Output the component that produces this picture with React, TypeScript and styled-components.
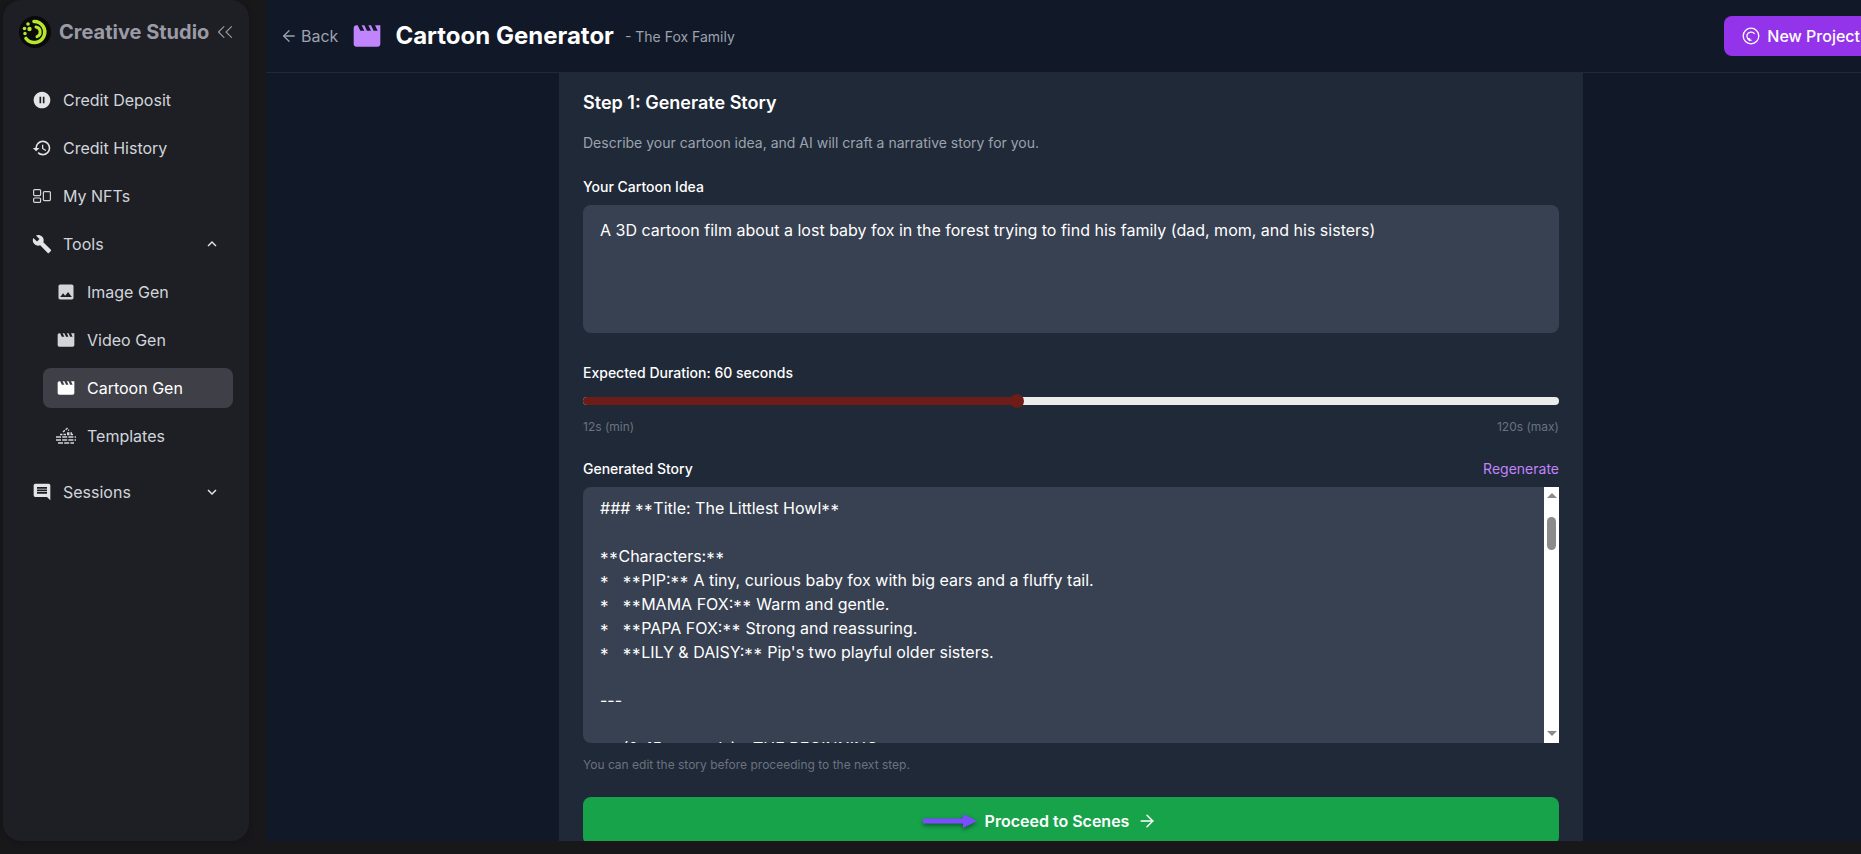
import React from "react";
import styled, { createGlobalStyle } from "styled-components";
import { ArrowLeft, ArrowRight, ChevronsLeft } from "lucide-react";
import {
  MdBuild,
  MdComment,
  MdExpandLess,
  MdExpandMore,
  MdHistory,
  MdImage,
  MdMovie,
  MdPauseCircleFilled,
} from "react-icons/md";

const GlobalStyle = createGlobalStyle`
  html, body {
    margin: 0;
    height: 100%;
    overflow: hidden;
    background: #18181b;
    font-family: Inter, "Liberation Sans", sans-serif;
  }
  * { box-sizing: border-box; }
`;

const Shell = styled.div`
  display: flex;
  width: 1861px;
  height: 854px;
  padding: 0 0 13px 3px;
  overflow: hidden;
`;

const Sidebar = styled.aside`
  flex: 0 0 246px;
  margin-right: 17px;
  background: #1e1f24;
  border-radius: 18px;
  box-shadow: 0 0 6px rgba(0, 0, 0, 0.25);
`;

const Brand = styled.div`
  display: flex;
  align-items: center;
  height: 64px;
  padding-left: 16px;
`;

const BrandName = styled.span`
  margin-left: 8px;
  font-size: 20px;
  font-weight: 700;
  color: #9b9ba6;
  white-space: nowrap;
`;

const Collapse = styled.span`
  display: flex;
  margin-left: 3px;
  color: #9b9ba6;
`;

const Nav = styled.nav`
  display: flex;
  flex-direction: column;
  gap: 8px;
  margin-top: 16px;
  padding: 0 16px;
`;

const NavItem = styled.div<{ $active?: boolean }>`
  display: flex;
  align-items: center;
  height: 40px;
  padding: 0 13px;
  border-radius: 8px;
  font-size: 16px;
  font-weight: 400;
  color: ${(p) => (p.$active ? "#ffffff" : "#d1d5db")};
  background: ${(p) => (p.$active ? "#3f4047" : "transparent")};
`;

const NavIcon = styled.span`
  display: flex;
  justify-content: center;
  flex: 0 0 20px;
  min-width: 0;
  margin-right: 11px;

  svg {
    flex-shrink: 0;
  }
`;

const Caret = styled.span`
  display: flex;
  margin-left: auto;
  margin-right: -1px;
`;

const ChildList = styled.div`
  display: flex;
  flex-direction: column;
  gap: 8px;
  margin-left: 24px;
  margin-bottom: 8px;
`;

const Main = styled.main`
  flex: 0 0 1610px;
  display: flex;
  flex-direction: column;
  background: #111827;
  overflow: hidden;
`;

const TopBar = styled.header`
  flex: 0 0 73px;
  display: flex;
  align-items: center;
  padding-left: 14px;
  border-bottom: 1px solid #1f2937;
`;

const BackLink = styled.span`
  display: flex;
  align-items: center;
  gap: 3px;
  font-size: 16px;
  color: #9ca3af;
`;

const TitleIcon = styled.span`
  display: flex;
  margin-left: 13px;
  color: #c084fc;
`;

const Title = styled.h1`
  margin: 0 0 0 12px;
  font-size: 24px;
  line-height: 32px;
  font-weight: 700;
  color: #ffffff;
`;

const Subtitle = styled.span`
  margin-left: 11px;
  font-size: 14px;
  color: #9ca3af;
`;

const NewProject = styled.button`
  display: flex;
  align-items: center;
  flex-shrink: 0;
  gap: 7px;
  margin-left: auto;
  margin-right: -4px;
  height: 40px;
  padding: 0 20px 0 18px;
  border: 0;
  border-radius: 8px;
  background: #9333ea;
  color: #ffffff;
  font-family: inherit;
  font-size: 16px;
  font-weight: 500;
`;

const Card = styled.section`
  flex: 1;
  width: 1024px;
  margin: 0 auto;
  padding: 16px 24px 0;
  background: #1f2937;
`;

const Heading = styled.h2`
  margin: 0;
  font-size: 18px;
  line-height: 28px;
  font-weight: 600;
  color: #ffffff;
`;

const Description = styled.p`
  margin: 16px 0 0;
  font-size: 14px;
  line-height: 20px;
  color: #9ca3af;
`;

const Label = styled.label`
  display: block;
  font-size: 14px;
  line-height: 20px;
  font-weight: 500;
  color: #ffffff;
`;

const IdeaField = styled.div`
  margin-top: 24px;
`;

const IdeaText = styled.div`
  height: 128px;
  margin-top: 8px;
  padding: 13px 17px;
  border-radius: 8px;
  background: #374151;
  font-size: 16px;
  line-height: 24px;
  color: #ffffff;
`;

const DurationField = styled.div`
  margin-top: 30px;
`;

const Track = styled.div`
  display: flex;
  align-items: center;
  height: 8px;
  margin-top: 14px;
  border-radius: 4px;
  background: #ececec;
`;

const TrackFill = styled.div`
  display: flex;
  align-items: center;
  justify-content: flex-end;
  height: 8px;
  border-radius: 4px 0 0 4px;
  background: #6e1c18;
`;

const Thumb = styled.div`
  flex: 0 0 14px;
  height: 14px;
  margin-right: -7px;
  border-radius: 50%;
  background: #6e1c18;
`;

const RangeEnds = styled.div`
  display: flex;
  justify-content: space-between;
  margin-top: 14px;
  font-size: 12px;
  line-height: 16px;
  color: #6b7280;
`;

const StoryHead = styled.div`
  display: flex;
  justify-content: space-between;
  margin-top: 24px;
`;

const Regenerate = styled.span`
  font-size: 14px;
  line-height: 20px;
  color: #c084fc;
`;

const StoryBox = styled.div`
  display: flex;
  height: 256px;
  margin-top: 8px;
  border-radius: 8px 0 0 8px;
  background: #374151;
  overflow: hidden;
`;

const StoryText = styled.div`
  flex: 1;
  padding: 9px 17px 0;
  font-size: 16px;
  line-height: 24px;
  color: #ffffff;
  white-space: pre-wrap;
`;

const Stars = styled.span`
  font-size: 17px;
  line-height: 0;
  letter-spacing: 0.7px;
  vertical-align: -3px;
`;

const ScrollTrack = styled.div`
  flex: 0 0 15px;
  display: flex;
  flex-direction: column;
  align-items: center;
  padding: 6px 0 7px;
  background: #ffffff;
`;

const ScrollArrow = styled.span<{ $down?: boolean }>`
  width: 0;
  height: 0;
  border-left: 5px solid transparent;
  border-right: 5px solid transparent;
  ${(p) => (p.$down ? "border-top" : "border-bottom")}: 5px solid #8a8a8a;
  ${(p) => (p.$down ? "margin-top: auto;" : "")}
`;

const ScrollThumb = styled.span`
  width: 9px;
  height: 33px;
  margin-top: 19px;
  border-radius: 5px;
  background: #8b8b8b;
`;

const Hint = styled.p`
  margin: 14px 0 0;
  font-size: 12px;
  line-height: 16px;
  color: #6b7280;
`;

const ProceedButton = styled.button`
  position: relative;
  display: flex;
  align-items: center;
  justify-content: center;
  gap: 8px;
  width: 100%;
  height: 48px;
  margin-top: 24px;
  border: 0;
  border-radius: 8px;
  background: #16a34a;
  color: #ffffff;
  font-family: inherit;
  font-size: 16px;
  font-weight: 600;
`;

const Annotation = styled.svg`
  position: absolute;
  left: 339px;
  top: 15px;
  filter: drop-shadow(0 2px 2px rgba(0, 0, 0, 0.45));
`;

const Logo = () => (
  <svg width="32" height="32" viewBox="0 0 32 32">
    <circle cx="16" cy="16" r="16" fill="#0a0a0a" />
    <path
      d="M15 5.5a10.5 10.5 0 1 1-8 17"
      fill="none"
      stroke="#b8e62e"
      strokeWidth="3.6"
      strokeLinecap="round"
    />
    <path
      d="M17 11a5 5 0 0 1 1 9.6"
      fill="none"
      stroke="#b8e62e"
      strokeWidth="3"
      strokeLinecap="round"
    />
    <circle cx="9" cy="8" r="1.8" fill="#b8e62e" />
    <circle cx="5.5" cy="12.5" r="1.8" fill="#b8e62e" />
    <circle cx="10.5" cy="13" r="2.2" fill="#b8e62e" />
    <circle cx="6" cy="17.5" r="1.7" fill="#b8e62e" />
  </svg>
);

const NftIcon = () => (
  <svg width="18" height="14" viewBox="0 0 18 14" fill="none" stroke="#d4d4d8" strokeWidth="1.2">
    <rect x="0.6" y="0.6" width="7" height="6" rx="1" />
    <rect x="0.6" y="9" width="7" height="4.4" rx="1" />
    <rect x="10.4" y="2.6" width="7" height="9" rx="1" />
  </svg>
);

const TemplatesIcon = () => (
  <svg width="22" height="18" viewBox="0 0 22 18" fill="none" stroke="#d4d4d8" strokeWidth="1.4">
    <path d="M8 5l4-3.5 2 2M12 6h5M5 7.5h13" strokeDasharray="2.5 1" />
    <path d="M1 10h20M1 13h20M3 16h16" strokeDasharray="5 1.2" />
  </svg>
);

const NewProjectIcon = () => (
  <svg width="18" height="18" viewBox="0 0 18 18" fill="none" stroke="#ffffff" strokeWidth="1.3">
    <circle cx="9" cy="9" r="7.8" />
    <path d="M12.6 6.8A4.4 4.4 0 0 0 5 8a4.4 4.4 0 0 0 4.6 5.3" />
    <path d="M5.4 11.6l2.2.4-.4 2.2" />
  </svg>
);

// "**" has wider and lower asterisks in the reference font
const Starred = ({ text }: { text: string }) => (
  <>
    {text.split(/(\*+)/).map((part, i) =>
      part.startsWith("*") ? <Stars key={i}>{part}</Stars> : part
    )}
  </>
);

const story = `### **Title: The Littlest Howl**

**Characters:**
*   **PIP:** A tiny, curious baby fox with big ears and a fluffy tail.
*   **MAMA FOX:** Warm and gentle.
*   **PAPA FOX:** Strong and reassuring.
*   **LILY & DAISY:** Pip's two playful older sisters.

---

\u00a0\u00a0\u00a0\u00a0\u00a0(0-15 seconds) - THE BEGINNING`;

export default function App() {
  return (
    <>
      <GlobalStyle />
      <Shell>
        <Sidebar>
          <Brand>
            <Logo />
            <BrandName>Creative Studio</BrandName>
            <Collapse>
              <ChevronsLeft size={26} strokeWidth={1} />
            </Collapse>
          </Brand>
          <Nav>
            <NavItem>
              <NavIcon>
                <MdPauseCircleFilled size={20} color="#e4e4e7" />
              </NavIcon>
              Credit Deposit
            </NavItem>
            <NavItem>
              <NavIcon>
                <MdHistory size={20} color="#e4e4e7" />
              </NavIcon>
              Credit History
            </NavItem>
            <NavItem>
              <NavIcon>
                <NftIcon />
              </NavIcon>
              My NFTs
            </NavItem>
            <NavItem>
              <NavIcon>
                <MdBuild size={20} color="#e4e4e7" />
              </NavIcon>
              Tools
              <Caret>
                <MdExpandLess size={18} color="#e4e4e7" />
              </Caret>
            </NavItem>
            <ChildList>
              <NavItem>
                <NavIcon>
                  <MdImage size={20} color="#d4d4d8" />
                </NavIcon>
                Image Gen
              </NavItem>
              <NavItem>
                <NavIcon>
                  <MdMovie size={20} color="#d4d4d8" />
                </NavIcon>
                Video Gen
              </NavItem>
              <NavItem $active>
                <NavIcon>
                  <MdMovie size={20} color="#ffffff" />
                </NavIcon>
                Cartoon Gen
              </NavItem>
              <NavItem>
                <NavIcon>
                  <TemplatesIcon />
                </NavIcon>
                Templates
              </NavItem>
            </ChildList>
            <NavItem>
              <NavIcon>
                <MdComment size={20} color="#e4e4e7" />
              </NavIcon>
              Sessions
              <Caret>
                <MdExpandMore size={18} color="#e4e4e7" />
              </Caret>
            </NavItem>
          </Nav>
        </Sidebar>
        <Main>
          <TopBar>
            <BackLink>
              <ArrowLeft size={18} strokeWidth={1.75} />
              Back
            </BackLink>
            <TitleIcon>
              <MdMovie size={32} />
            </TitleIcon>
            <Title>Cartoon Generator</Title>
            <Subtitle>- The Fox Family</Subtitle>
            <NewProject>
              <NewProjectIcon />
              New Project
            </NewProject>
          </TopBar>
          <Card>
            <Heading>Step 1: Generate Story</Heading>
            <Description>Describe your cartoon idea, and AI will craft a narrative story for you.</Description>
            <IdeaField>
              <Label>Your Cartoon Idea</Label>
              <IdeaText>
                A 3D cartoon film about a lost baby fox in the forest trying to find his family (dad, mom, and his sisters)
              </IdeaText>
            </IdeaField>
            <DurationField>
              <Label>Expected Duration: 60 seconds</Label>
              <Track>
                <TrackFill style={{ width: `${((60 - 12) / (120 - 12)) * 100}%` }}>
                  <Thumb />
                </TrackFill>
              </Track>
              <RangeEnds>
                <span>12s (min)</span>
                <span>120s (max)</span>
              </RangeEnds>
            </DurationField>
            <StoryHead>
              <Label>Generated Story</Label>
              <Regenerate>Regenerate</Regenerate>
            </StoryHead>
            <StoryBox>
              <StoryText>
                <Starred text={story} />
              </StoryText>
              <ScrollTrack>
                <ScrollArrow />
                <ScrollThumb />
                <ScrollArrow $down />
              </ScrollTrack>
            </StoryBox>
            <Hint>You can edit the story before proceeding to the next step.</Hint>
            <ProceedButton>
              <Annotation width="56" height="18" viewBox="0 0 56 18">
                <path d="M1 6.5h40V2l14 7-14 7v-4.5H1z" fill="#7c4dff" />
              </Annotation>
              Proceed to Scenes
              <ArrowRight size={20} strokeWidth={1.75} />
            </ProceedButton>
          </Card>
        </Main>
      </Shell>
    </>
  );
}
